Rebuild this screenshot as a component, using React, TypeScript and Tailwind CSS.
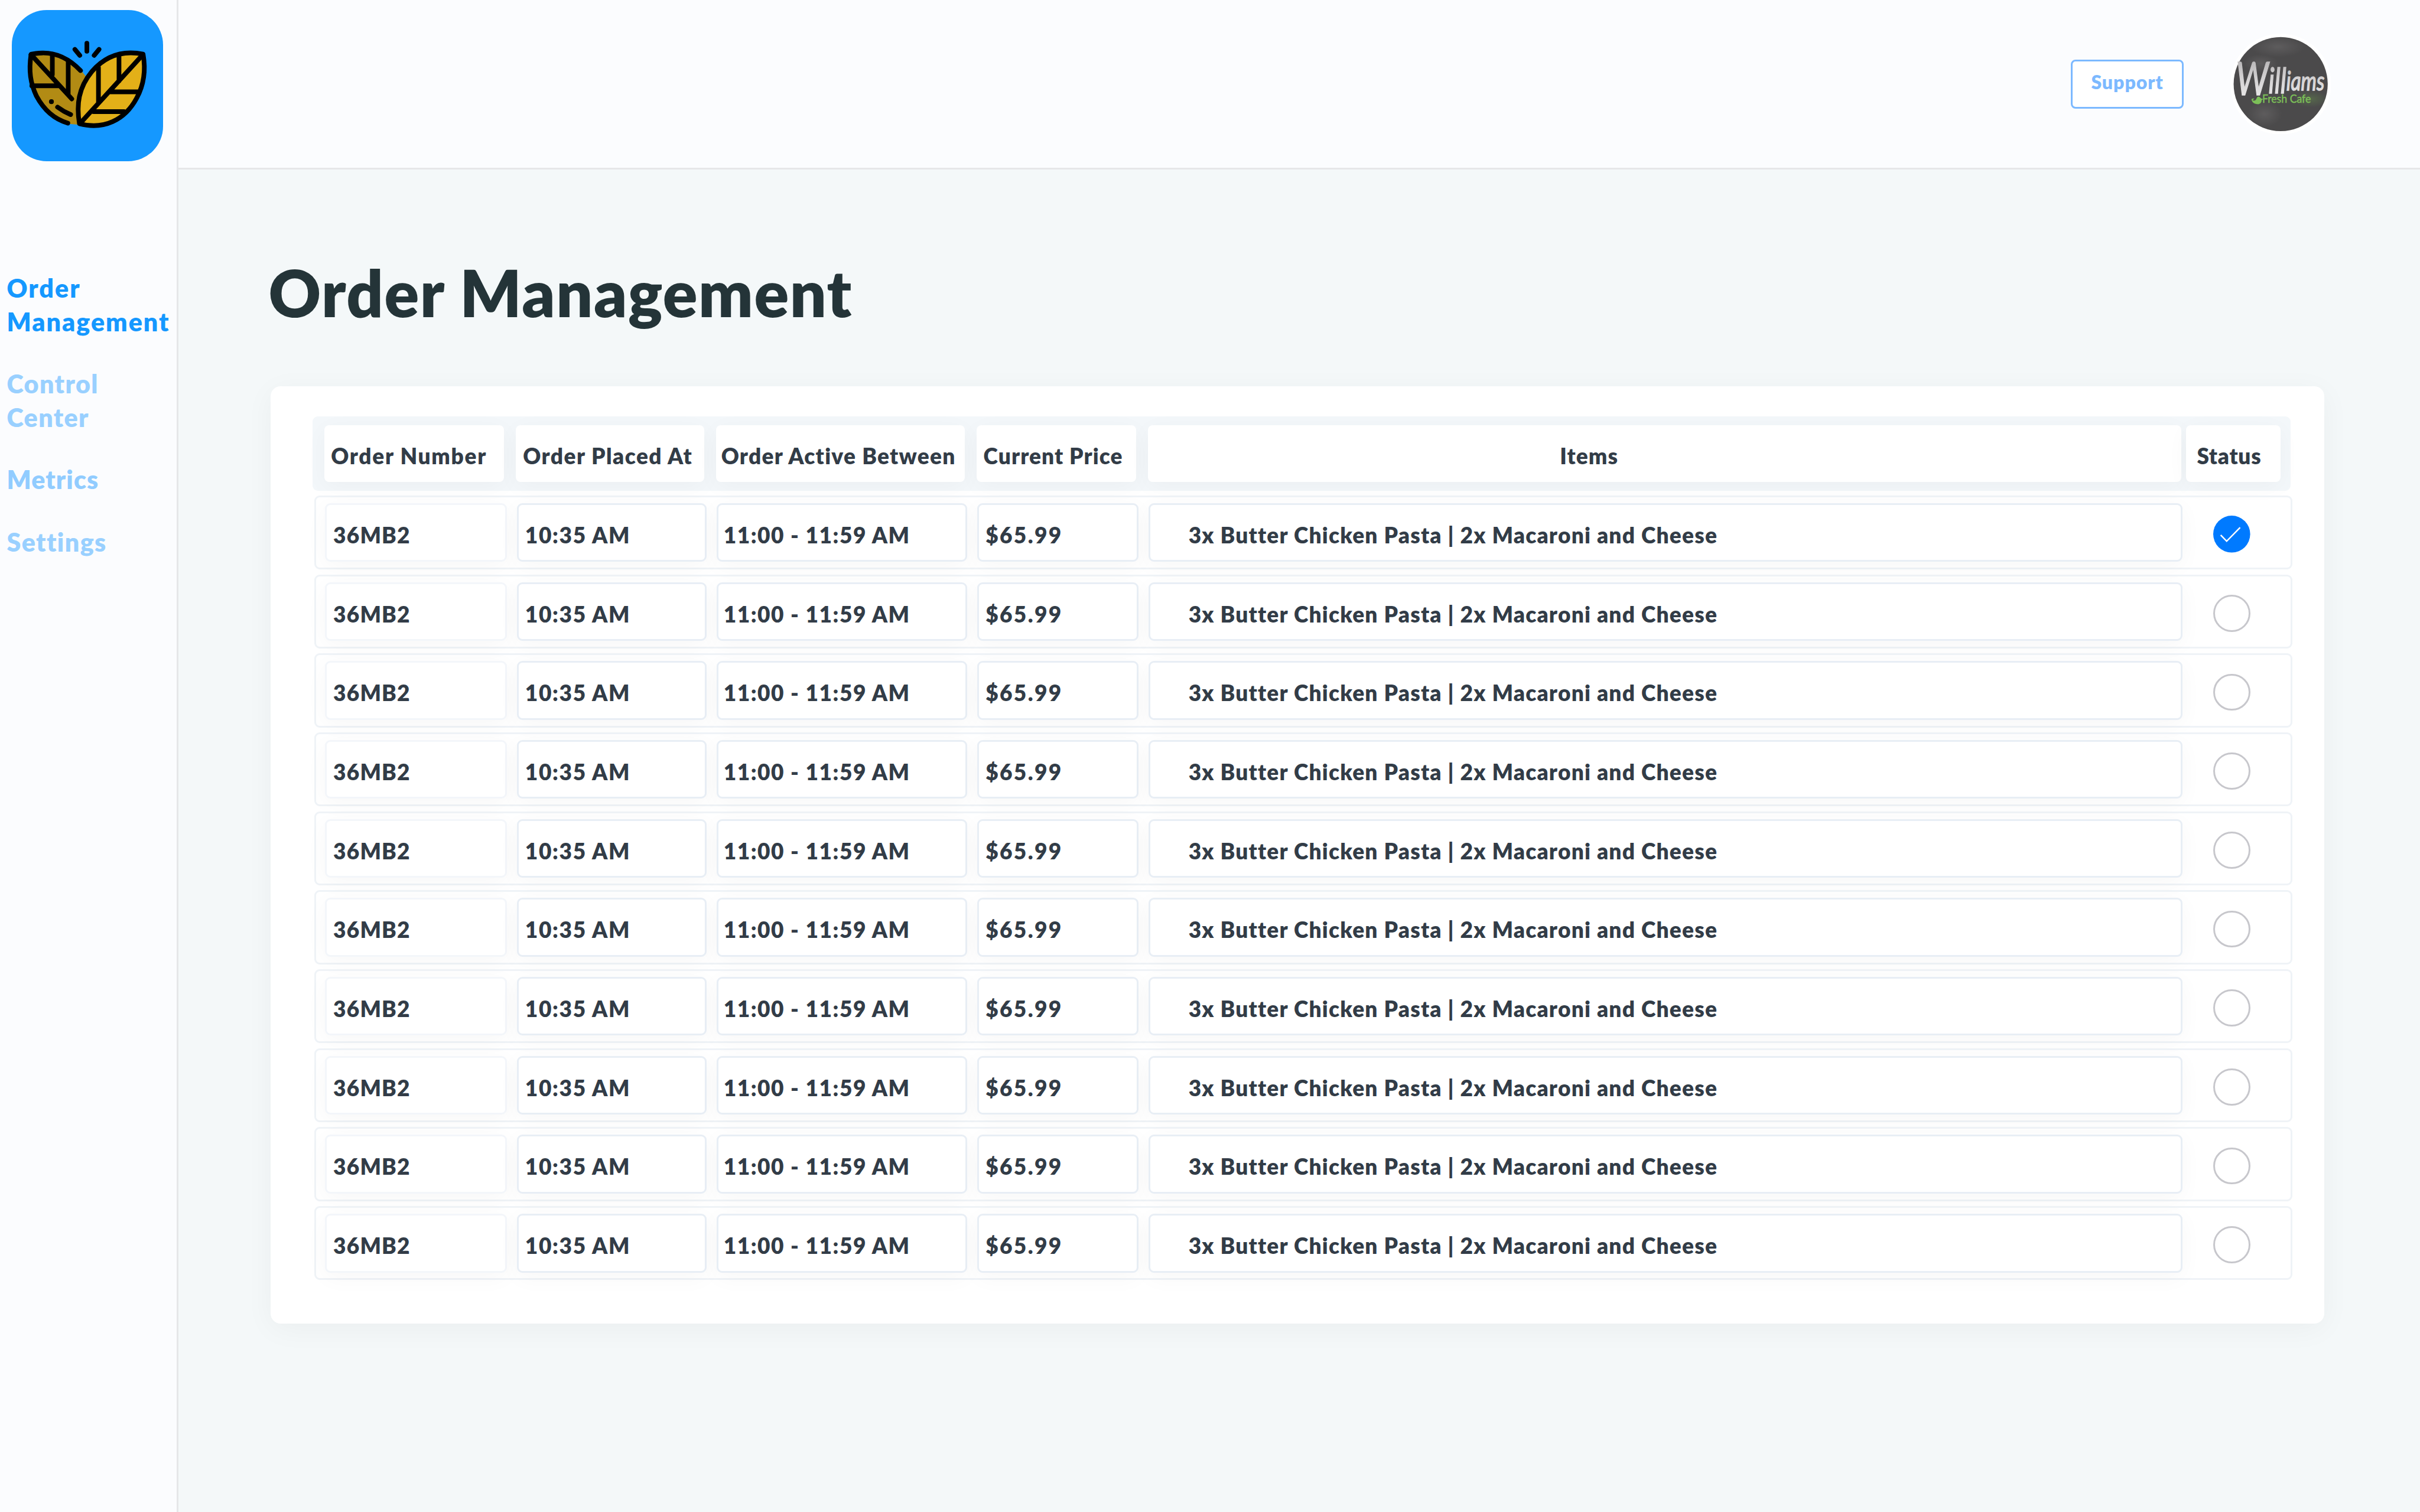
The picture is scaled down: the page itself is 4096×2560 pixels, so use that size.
const CELL_SHADOW = 'shadow-[0_8px_38px_rgba(0,0,0,0.035)]';

const HEADERS = [
  { label: 'Order Number', box: 'w-[304.4px] mr-[19.9px] pl-[11.3px] tracking-[1.74px]' },
  { label: 'Order Placed At', box: 'w-[318.6px] mr-[19.9px] pl-[12px] tracking-[1.5px]' },
  { label: 'Order Active Between', box: 'w-[421px] mr-[19.9px] pl-[9px] tracking-[1.33px]' },
  { label: 'Current Price', box: 'w-[270.2px] mr-[19.9px] pl-[12px] tracking-[1.12px]' },
  { label: 'Items', box: 'w-[1749.3px] mr-[8.5px] pl-[697.7px] tracking-[1.2px]' },
  { label: 'Status', box: 'w-[159.3px] pl-[18px] tracking-[0.75px]' },
];

const CELLS = [
  'w-[307.2px] mr-[17.1px] pl-[10.7px] tracking-[1.2px] border-[#f3f6fa]',
  'w-[321.4px] mr-[17.1px] pl-[11.1px] tracking-[1.7px] border-[#e8eef5]',
  'w-[423.8px] mr-[17.1px] pl-[8.5px] tracking-[1.54px] border-[#e8eef5]',
  'w-[273px] mr-[17.1px] pl-[11.1px] tracking-[2.4px] border-[#e8eef5]',
  'w-[1749.4px] mr-[52.6px] pl-[64.5px] tracking-[1.25px] border-[#e8eef5]',
];

const ORDER = ['36MB2', '10:35 AM', '11:00 - 11:59 AM', '$65.99', '3x Butter Chicken Pasta | 2x Macaroni and Cheese'];

const NAV = [
  { lines: ['Order', 'Management'], style: 'text-[#1598ff] tracking-[2px]' },
  { lines: ['Control', 'Center'], style: 'text-[#99d0ff] tracking-[1.4px]' },
  { lines: ['Metrics'], style: 'text-[#91ccff] tracking-[1.1px]' },
  { lines: ['Settings'], style: 'text-[#99d0ff] tracking-[1.4px]' },
];

function Logo() {
  return (
    <svg viewBox="63 54 810 810" className="block h-[256px] w-[256px] rounded-[59px] bg-[#1598ff]">
      <path
        d="M440 385C370 315 300 283 225 284Q190 285 165 292C150 380 165 450 200 520C240 590 300 640 368 664L415 668L500 460Z"
        fill="#b28b14"
      />
      <g fill="none" stroke="#000" strokeWidth="25" strokeLinecap="round" strokeLinejoin="round">
        <path d="M431 378C370 315 300 282 225 284Q190 285 166 291C153 380 162 445 195 515C235 590 295 640 363 660" />
        <path d="M166 293L384 530M280 290V400M365 325V505M170 460H312M308 574Q340 598 378 614" />
        <path d="M465 232V275M401 265L427 297M530 265L504 297" />
        <path
          d="M425 663C408 560 420 470 492 383C565 298 655 268 766 290C782 380 770 455 732 525C668 645 555 697 425 663Z"
          fill="#e3b018"
        />
        <path d="M428 662L765 293M527 362V552M637 300V434M592 492H744M500 598H664" />
      </g>
      <circle cx="275" cy="545" r="13" />
    </svg>
  );
}

function Avatar() {
  return (
    <svg viewBox="933 60 522 540" preserveAspectRatio="none" className="block h-[170.7px] w-[170.7px]">
      <defs>
        <clipPath id="disc">
          <ellipse cx="1193.5" cy="330" rx="243.5" ry="252" />
        </clipPath>
        <linearGradient id="chalk" x1="0" y1="0" x2="0" y2="1">
          <stop offset="0" stopColor="#a9a7a8" />
          <stop offset="0.5" stopColor="#d2d0d1" />
          <stop offset="1" stopColor="#f2f1f1" />
        </linearGradient>
        <radialGradient id="smudge">
          <stop offset="0" stopColor="#6a6869" stopOpacity="0.6" />
          <stop offset="1" stopColor="#6a6869" stopOpacity="0" />
        </radialGradient>
        <radialGradient id="greenSmudge">
          <stop offset="0" stopColor="#5c7a4c" stopOpacity="0.6" />
          <stop offset="1" stopColor="#5c7a4c" stopOpacity="0" />
        </radialGradient>
      </defs>
      <ellipse cx="1194" cy="330" rx="261" ry="270" fill="#fff" />
      <g clipPath="url(#disc)">
        <rect x="933" y="60" width="522" height="540" fill="#4b4a4b" />
        <ellipse cx="1180" cy="130" rx="140" ry="55" fill="url(#smudge)" />
        <ellipse cx="1090" cy="220" rx="90" ry="50" fill="url(#smudge)" />
        <ellipse cx="1110" cy="490" rx="90" ry="70" fill="url(#smudge)" />
        <ellipse cx="1350" cy="410" rx="90" ry="45" fill="url(#greenSmudge)" />
      </g>
      <text
        x="962"
        y="390"
        fill="url(#chalk)"
        stroke="url(#chalk)"
        strokeWidth="5"
        fontFamily="Lato, sans-serif"
        fontStyle="italic"
        fontWeight="400"
        textLength="458"
        lengthAdjust="spacingAndGlyphs"
      >
        <tspan fontSize="245">W</tspan>
        <tspan fontSize="190" dy="-12">ill</tspan>
        <tspan fontSize="142" dy="-15">iams</tspan>
      </text>
      <text x="1098" y="431" fontSize="58" fill="#7cbf58" fontFamily="Lato, sans-serif" fontWeight="400" stroke="#7cbf58" strokeWidth="1.5" textLength="252" lengthAdjust="spacingAndGlyphs">
        Fresh Cafe
      </text>
      <path d="M1058 408Q1040 404 1043 416Q1050 438 1078 438Q1096 434 1095 416L1104 410Q1090 408 1084 399Q1074 393 1068 408Q1062 424 1048 416" fill="#7cbf58" />
    </svg>
  );
}

function StatusMark({ done }: { done: boolean }) {
  if (!done) {
    return <div className="mt-[31.2px] h-[62.6px] w-[62.6px] rounded-full border-[3px] border-[#c7c7cc]" />;
  }
  return (
    <svg viewBox="513 751 198 198" className="mt-[31.2px] block h-[62.6px] w-[62.6px]">
      <circle cx="612" cy="850" r="99" fill="#007aff" />
      <path d="M553 855L585 888L657 815" fill="none" stroke="#fff" strokeWidth="8" />
    </svg>
  );
}

export default function App() {
  return (
    <div className="flex h-[2560px] w-[4096px] overflow-hidden bg-[#f4f8f9] font-['Lato',sans-serif] font-extrabold">
      <aside className="w-[302px] shrink-0 border-r-[3px] border-[#e6e7e9] bg-[#fbfcfe]">
        <div className="pl-[20px] pt-[17px]">
          <Logo />
        </div>
        <nav className="mt-[186px] flex flex-col gap-[48.2px] whitespace-nowrap pl-[11.5px] text-[43px] leading-[57px]">
          {NAV.map((item) => (
            <a key={item.lines[0]} className={item.style}>
              {item.lines.map((line) => (
                <span key={line} className="block">{line}</span>
              ))}
            </a>
          ))}
        </nav>
      </aside>

      <div className="flex min-w-0 flex-1 flex-col">
        <header className="flex h-[287px] shrink-0 items-center justify-end gap-[78.3px] border-b-[3px] border-[#e6e7e9] bg-[#fbfcfe] pr-[150.6px]">
          <button className="h-[83px] w-[191px] rounded-[8px] border-[3px] border-[#7cb9ff] bg-white pb-[6px] pl-[31px] text-left text-[32px] leading-[60px] tracking-[0.95px] text-[#7cb9ff]">
            Support
          </button>
          <Avatar />
        </header>

        <main className="pt-[148px]">
          <h1 className="pl-[152.5px] text-[109px] leading-[120px] tracking-[1.55px] text-[#243438]">Order Management</h1>

          <section className="ml-[155.6px] mt-[99.2px] h-[1587px] w-[3476.4px] rounded-[17px] bg-white pl-[71.4px] pt-[51.2px] text-[37px] text-[#323c47] shadow-[0_9px_50px_rgba(0,0,0,0.045)]">
            <div className="flex h-[125.2px] w-[3348px] rounded-[9px] bg-[#f3f7fa] pl-[19.9px] pt-[14.2px]">
              {HEADERS.map((h) => (
                <div key={h.label} className={`h-[96.7px] shrink-0 whitespace-nowrap rounded-[8px] bg-white leading-[104px] ${CELL_SHADOW} ${h.box}`}>
                  {h.label}
                </div>
              ))}
            </div>
            <div className="ml-[2.8px] mt-[8.5px] flex flex-col gap-[8.53px]">
              {Array.from({ length: 10 }, (_, row) => (
                <div key={row} className="flex h-[125.16px] w-[3348px] rounded-[9px] border-[3px] border-[#eff3f7] pl-[15.6px]">
                  {ORDER.map((text, i) => (
                    <div key={text} className={`mt-[9.8px] h-[99.6px] shrink-0 whitespace-nowrap rounded-[9px] border-[3px] bg-white leading-[101.4px] ${CELL_SHADOW} ${CELLS[i]}`}>
                      {text}
                    </div>
                  ))}
                  <StatusMark done={row === 0} />
                </div>
              ))}
            </div>
          </section>
        </main>
      </div>
    </div>
  );
}
